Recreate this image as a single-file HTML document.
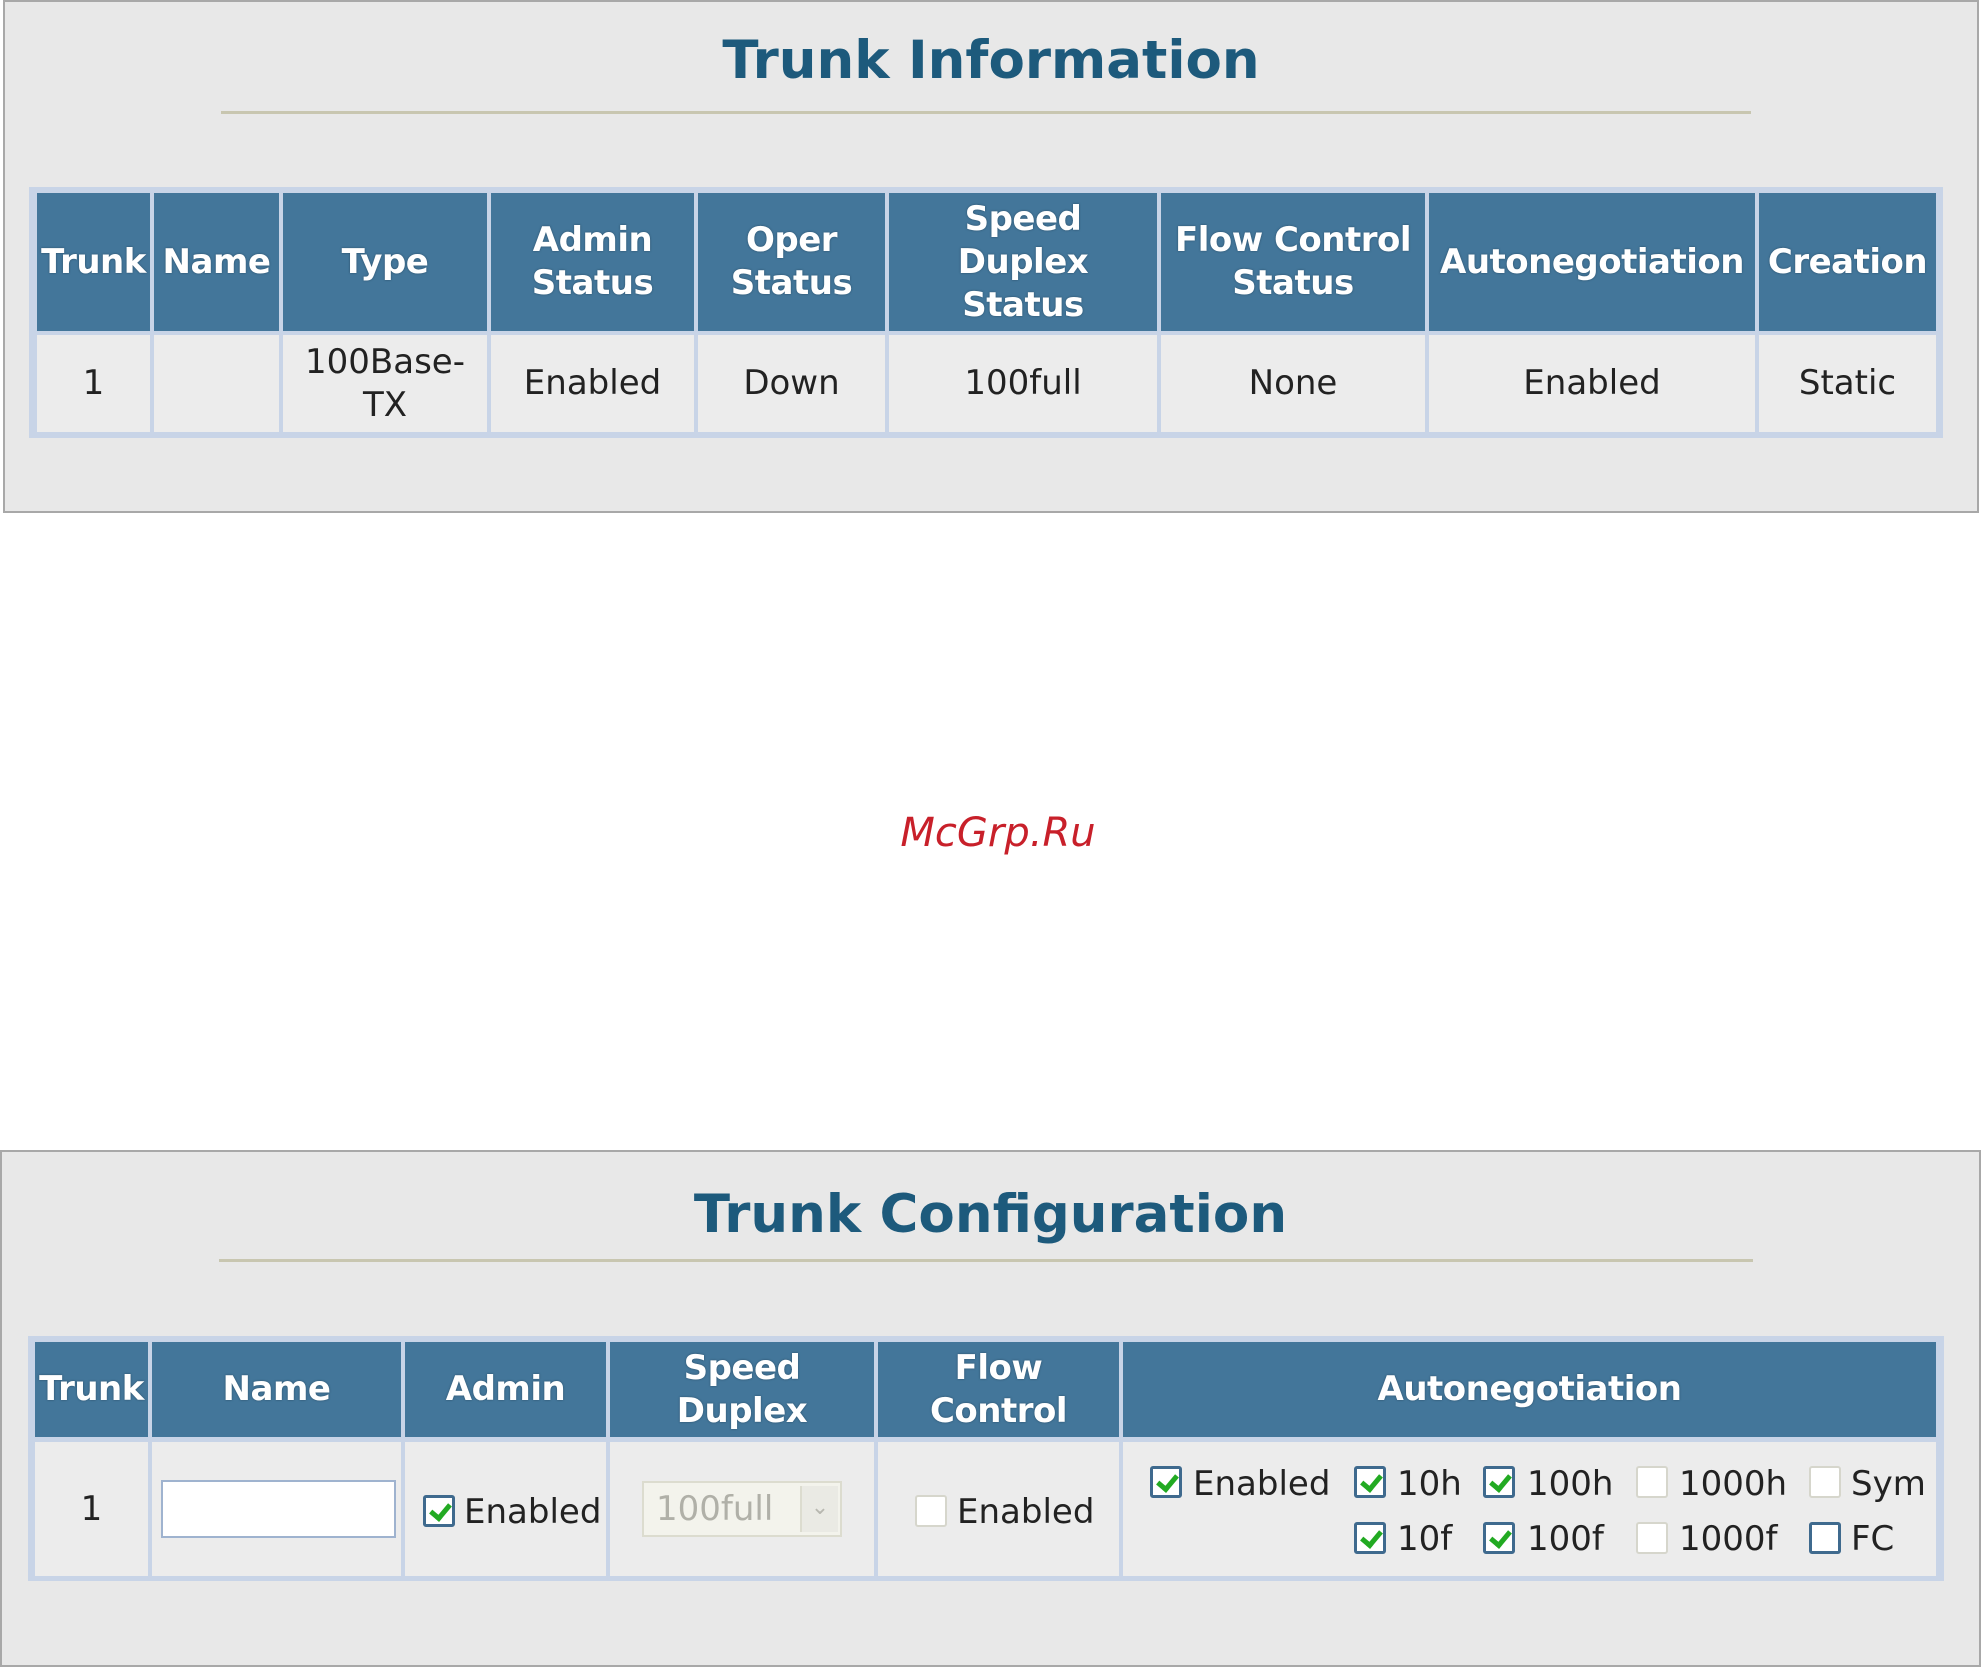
<!DOCTYPE html>
<html><head><meta charset="utf-8"><style>
body{margin:0;width:1982px;height:1669px;background:#fff;position:relative;overflow:hidden;font-family:"DejaVu Sans","Liberation Sans",sans-serif}
.p{position:absolute;background:#e8e8e8;border:2px solid #a8a8a8;box-sizing:border-box}
.t{position:absolute;left:0;width:100%;text-align:center;font-weight:bold;color:#1d5a7c;font-size:53px}
.ln{position:absolute;height:3px;background:#c8c6b0}
.tb{position:absolute;background:#c8d4e7}
.c{position:absolute;display:flex;align-items:center;justify-content:center;text-align:center;box-sizing:border-box;white-space:nowrap}
.h{background:#43769a;color:#fff;font-weight:bold;font-size:34px;line-height:43px;letter-spacing:-0.5px;text-shadow:0 0 2px #2a4d66}
.d{background:#ececec;color:#222;font-size:34px;line-height:43px}
.cb{position:absolute;width:32px;height:32px;box-sizing:border-box;background:#fff;border:3px solid #3f6a8e;border-radius:3px}
.cb.k::after{content:"";position:absolute;left:8px;top:2px;width:8px;height:15px;border:solid #22aa22;border-width:0 5px 5px 0;transform:rotate(40deg)}
.cb.g{border:2px solid #d6d6cc}
.lb{position:absolute;font-size:34px;color:#222;line-height:38px}
</style></head><body>

<div class="p" style="left:3px;top:0;width:1976px;height:513px">
<div class="t" style="top:28px">Trunk Information</div>
</div>
<div class="ln" style="left:221px;top:111px;width:1530px"></div>
<div class="tb" style="left:29px;top:187px;width:1914px;height:251px"></div>

<div class="c h" style="left:37px;top:193px;width:113px;height:138px">Trunk</div>
<div class="c h" style="left:154px;top:193px;width:125px;height:138px">Name</div>
<div class="c h" style="left:283px;top:193px;width:204px;height:138px">Type</div>
<div class="c h" style="left:491px;top:193px;width:203px;height:138px">Admin<br>Status</div>
<div class="c h" style="left:698px;top:193px;width:187px;height:138px">Oper<br>Status</div>
<div class="c h" style="left:889px;top:193px;width:268px;height:138px">Speed<br>Duplex<br>Status</div>
<div class="c h" style="left:1161px;top:193px;width:264px;height:138px">Flow Control<br>Status</div>
<div class="c h" style="left:1429px;top:193px;width:326px;height:138px">Autonegotiation</div>
<div class="c h" style="left:1759px;top:193px;width:177px;height:138px">Creation</div>

<div class="c d" style="left:37px;top:335px;width:113px;height:97px">1</div>
<div class="c d" style="left:154px;top:335px;width:125px;height:97px"></div>
<div class="c d" style="left:283px;top:335px;width:204px;height:97px">100Base-<br>TX</div>
<div class="c d" style="left:491px;top:335px;width:203px;height:97px">Enabled</div>
<div class="c d" style="left:698px;top:335px;width:187px;height:97px">Down</div>
<div class="c d" style="left:889px;top:335px;width:268px;height:97px">100full</div>
<div class="c d" style="left:1161px;top:335px;width:264px;height:97px">None</div>
<div class="c d" style="left:1429px;top:335px;width:326px;height:97px">Enabled</div>
<div class="c d" style="left:1759px;top:335px;width:177px;height:97px">Static</div>

<div style="position:absolute;left:860px;top:810px;width:276px;text-align:center;color:#c8202a;font-style:italic;font-size:40px">McGrp.Ru</div>

<div class="p" style="left:0;top:1150px;width:1981px;height:517px">
<div class="t" style="top:32px">Trunk Configuration</div>
</div>
<div class="ln" style="left:219px;top:1259px;width:1534px"></div>
<div class="tb" style="left:28px;top:1336px;width:1916px;height:245px"></div>

<div class="c h" style="left:35px;top:1342px;width:113px;height:95px">Trunk</div>
<div class="c h" style="left:152px;top:1342px;width:249px;height:95px">Name</div>
<div class="c h" style="left:405px;top:1342px;width:201px;height:95px">Admin</div>
<div class="c h" style="left:610px;top:1342px;width:264px;height:95px">Speed<br>Duplex</div>
<div class="c h" style="left:878px;top:1342px;width:241px;height:95px">Flow<br>Control</div>
<div class="c h" style="left:1123px;top:1342px;width:813px;height:95px">Autonegotiation</div>

<div class="c d" style="left:35px;top:1442px;width:113px;height:134px">1</div>
<div class="c d" style="left:152px;top:1442px;width:249px;height:134px"></div>
<div class="c d" style="left:405px;top:1442px;width:201px;height:134px"></div>
<div class="c d" style="left:610px;top:1442px;width:264px;height:134px"></div>
<div class="c d" style="left:878px;top:1442px;width:241px;height:134px"></div>
<div class="c d" style="left:1123px;top:1442px;width:813px;height:134px"></div>

<div style="position:absolute;left:161px;top:1480px;width:235px;height:58px;background:#fff;border:2px solid #9fb3cf;box-sizing:border-box"></div>

<div class="cb k" style="left:423px;top:1495px"></div><div class="lb" style="left:464px;top:1493px">Enabled</div>
<div style="position:absolute;left:642px;top:1481px;width:200px;height:56px;background:#f3f3ec;border:2px solid #dcdccf;box-sizing:border-box"></div>
<div style="position:absolute;left:656px;top:1490px;font-size:34px;color:#b0b0a8;line-height:38px">100full</div>
<div style="position:absolute;left:800px;top:1486px;width:36px;height:46px;background:#eaeae4;border-left:2px solid #dcdccf;color:#b8b8b0;font-size:22px;text-align:center;line-height:44px">&#8964;</div>
<div class="cb g" style="left:915px;top:1495px"></div><div class="lb" style="left:957px;top:1493px">Enabled</div>

<div class="cb k" style="left:1150px;top:1466px"></div><div class="lb" style="left:1193px;top:1465px">Enabled</div>
<div class="cb k" style="left:1354px;top:1466px"></div><div class="lb" style="left:1397px;top:1465px">10h</div>
<div class="cb k" style="left:1483px;top:1466px"></div><div class="lb" style="left:1527px;top:1465px">100h</div>
<div class="cb g" style="left:1636px;top:1466px"></div><div class="lb" style="left:1679px;top:1465px">1000h</div>
<div class="cb g" style="left:1809px;top:1466px"></div><div class="lb" style="left:1851px;top:1465px">Sym</div>

<div class="cb k" style="left:1354px;top:1522px"></div><div class="lb" style="left:1397px;top:1520px">10f</div>
<div class="cb k" style="left:1483px;top:1522px"></div><div class="lb" style="left:1527px;top:1520px">100f</div>
<div class="cb g" style="left:1636px;top:1522px"></div><div class="lb" style="left:1679px;top:1520px">1000f</div>
<div class="cb" style="left:1809px;top:1522px"></div><div class="lb" style="left:1851px;top:1520px">FC</div>

</body></html>
